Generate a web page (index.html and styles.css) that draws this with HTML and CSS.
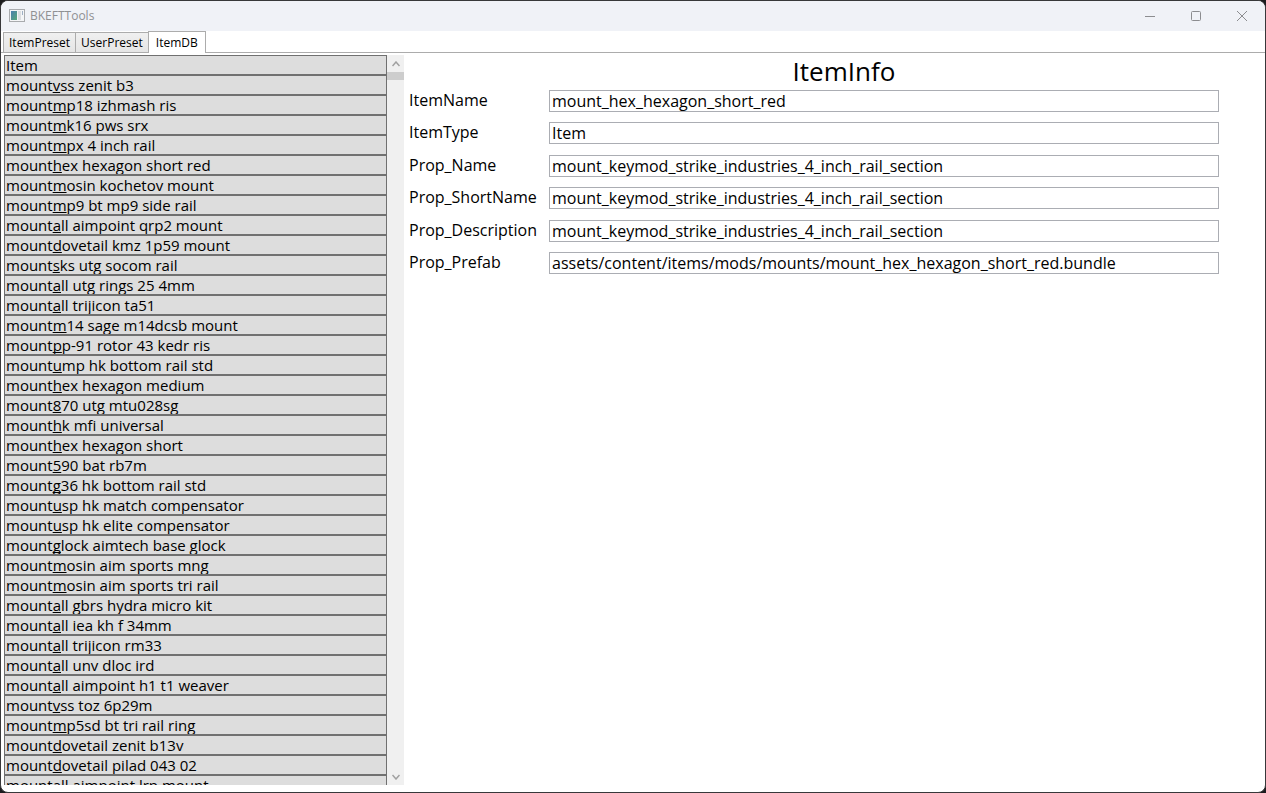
FILE: index.html
```html
<!DOCTYPE html>
<html lang="en">
<head>
<meta charset="utf-8">
<title>BKEFTTools</title>
<link rel="stylesheet" href="styles.css">
</head>
<body>
<div class="window">
  <header class="titlebar">
    <svg class="app-icon" width="16" height="14" viewBox="0 0 16 14" aria-hidden="true">
      <defs><linearGradient id="pane" x1="0" y1="0" x2="1" y2="1"><stop offset="0" stop-color="#4b7fb0"/><stop offset="1" stop-color="#58a878"/></linearGradient></defs>
      <rect x="0.5" y="0.5" width="15" height="12" fill="#f4f5f7" stroke="#a9abae"/>
      <rect x="2" y="2" width="6" height="9" fill="url(#pane)"/>
      <rect x="9" y="2" width="3" height="9" fill="#dcdee1"/>
      <rect x="13" y="2" width="1" height="4" fill="#9fb0c4"/>
    </svg>
    <h1 class="title">BKEFTTools</h1>
    <div class="controls">
      <button class="control" type="button" aria-label="Minimize"><svg width="12" height="12" viewBox="0 0 12 12"><path d="M1 6.500H11"/></svg></button>
      <button class="control" type="button" aria-label="Maximize"><svg width="12" height="12" viewBox="0 0 12 12"><rect x="1.500" y="1.500" width="9" height="9" rx="1"/></svg></button>
      <button class="control" type="button" aria-label="Close"><svg width="12" height="12" viewBox="0 0 12 12"><path d="M1 1L11 11M11 1L1 11"/></svg></button>
    </div>
  </header>
  <div class="tabs" role="tablist">
    <button class="tab" type="button" role="tab">ItemPreset</button>
    <button class="tab" type="button" role="tab">UserPreset</button>
    <button class="tab tab-active" type="button" role="tab" aria-selected="true">ItemDB</button>
  </div>
  <main class="content">
    <div class="list-pane">
      <div class="items">
        <button class="item" type="button">Item</button>
        <button class="item" type="button">mount<u>v</u>ss zenit b3</button>
        <button class="item" type="button">mount<u>m</u>p18 izhmash ris</button>
        <button class="item" type="button">mount<u>m</u>k16 pws srx</button>
        <button class="item" type="button">mount<u>m</u>px 4 inch rail</button>
        <button class="item" type="button">mount<u>h</u>ex hexagon short red</button>
        <button class="item" type="button">mount<u>m</u>osin kochetov mount</button>
        <button class="item" type="button">mount<u>m</u>p9 bt mp9 side rail</button>
        <button class="item" type="button">mount<u>a</u>ll aimpoint qrp2 mount</button>
        <button class="item" type="button">mount<u>d</u>ovetail kmz 1p59 mount</button>
        <button class="item" type="button">mount<u>s</u>ks utg socom rail</button>
        <button class="item" type="button">mount<u>a</u>ll utg rings 25 4mm</button>
        <button class="item" type="button">mount<u>a</u>ll trijicon ta51</button>
        <button class="item" type="button">mount<u>m</u>14 sage m14dcsb mount</button>
        <button class="item" type="button">mount<u>p</u>p-91 rotor 43 kedr ris</button>
        <button class="item" type="button">mount<u>u</u>mp hk bottom rail std</button>
        <button class="item" type="button">mount<u>h</u>ex hexagon medium</button>
        <button class="item" type="button">mount<u>8</u>70 utg mtu028sg</button>
        <button class="item" type="button">mount<u>h</u>k mfi universal</button>
        <button class="item" type="button">mount<u>h</u>ex hexagon short</button>
        <button class="item" type="button">mount<u>5</u>90 bat rb7m</button>
        <button class="item" type="button">mount<u>g</u>36 hk bottom rail std</button>
        <button class="item" type="button">mount<u>u</u>sp hk match compensator</button>
        <button class="item" type="button">mount<u>u</u>sp hk elite compensator</button>
        <button class="item" type="button">mount<u>g</u>lock aimtech base glock</button>
        <button class="item" type="button">mount<u>m</u>osin aim sports mng</button>
        <button class="item" type="button">mount<u>m</u>osin aim sports tri rail</button>
        <button class="item" type="button">mount<u>a</u>ll gbrs hydra micro kit</button>
        <button class="item" type="button">mount<u>a</u>ll iea kh f 34mm</button>
        <button class="item" type="button">mount<u>a</u>ll trijicon rm33</button>
        <button class="item" type="button">mount<u>a</u>ll unv dloc ird</button>
        <button class="item" type="button">mount<u>a</u>ll aimpoint h1 t1 weaver</button>
        <button class="item" type="button">mount<u>v</u>ss toz 6p29m</button>
        <button class="item" type="button">mount<u>m</u>p5sd bt tri rail ring</button>
        <button class="item" type="button">mount<u>d</u>ovetail zenit b13v</button>
        <button class="item" type="button">mount<u>d</u>ovetail pilad 043 02</button>
        <button class="item" type="button">mount<u>a</u>ll aimpoint lrp mount</button>
      </div>
      <div class="scrollbar">
        <button class="arrow" type="button" aria-label="Scroll up"><svg width="8" height="6" viewBox="0 0 8 6"><path d="M0.500 5L4 1L7.500 5"/></svg></button>
        <div class="track"><div class="thumb"></div></div>
        <button class="arrow" type="button" aria-label="Scroll down"><svg width="8" height="6" viewBox="0 0 8 6"><path d="M0.500 1L4 5L7.500 1"/></svg></button>
      </div>
    </div>
    <section class="info">
      <h2 class="heading">ItemInfo</h2>
      <form class="fields">
        <label for="name">ItemName</label><input id="name" type="text" value="mount_hex_hexagon_short_red">
        <label for="type">ItemType</label><input id="type" type="text" value="Item">
        <label for="pname">Prop_Name</label><input id="pname" type="text" value="mount_keymod_strike_industries_4_inch_rail_section">
        <label for="pshort">Prop_ShortName</label><input id="pshort" type="text" value="mount_keymod_strike_industries_4_inch_rail_section">
        <label for="pdesc">Prop_Description</label><input id="pdesc" type="text" value="mount_keymod_strike_industries_4_inch_rail_section">
        <label for="prefab">Prop_Prefab</label><input id="prefab" type="text" value="assets/content/items/mods/mounts/mount_hex_hexagon_short_red.bundle">
      </form>
    </section>
  </main>
</div>
</body>
</html>
```
FILE: styles.css
```css
* { box-sizing: border-box; }
body {
  margin: 0;
  background: #1c1c1e;
  color: #000;
  font-family: "Open Sans", "Noto Sans", sans-serif;
}
button, input { font-family: inherit; color: inherit; margin: 0; }
.window {
  display: flex;
  flex-direction: column;
  height: 100vh;
  border: 1px solid #38383a;
  border-radius: 8px;
  background: #fff;
  overflow: hidden;
}
.titlebar {
  display: flex;
  align-items: center;
  flex: none;
  height: 30px;
  padding-left: 8px;
  background: #f0f2f7;
}
.title {
  flex: 1;
  margin: 0 0 0 5px;
  font-size: 12px;
  font-weight: 400;
  line-height: 16px;
  color: #8f9093;
}
.controls { display: flex; }
.control {
  display: grid;
  place-items: center;
  width: 46px;
  height: 28px;
  padding: 0;
  border: 0;
  background: none;
}
.control svg { fill: none; stroke: #8c8d90; stroke-width: 1; }
.tabs {
  display: flex;
  align-items: flex-end;
  flex: none;
  height: 22px;
  padding-left: 2px;
  border-bottom: 1px solid #acacac;
}
.tab {
  height: 20px;
  padding: 0 5px;
  border: 1px solid #acacac;
  border-bottom: 0;
  background: linear-gradient(#f0f0f0, #e5e5e5);
  font-size: 12px;
  line-height: 18px;
}
.tab + .tab { border-left: 0; }
.tab.tab-active {
  height: 22px;
  margin-bottom: -1px;
  padding: 0 7px;
  margin-left: -1px;
  border-left: 1px solid #acacac;
  background: #fff;
}
.content {
  display: flex;
  flex: 1;
  min-height: 0;
  padding: 2px 0 7px 3px;
}
.list-pane {
  display: flex;
  flex: none;
  width: 400px;
  min-height: 0;
}
.items { flex: 1; overflow: hidden; }
.item {
  display: block;
  width: 100%;
  height: 20px;
  padding: 0 1px;
  border: 1px solid #707070;
  background: #ddd;
  font-size: 15px;
  line-height: 18px;
  text-align: left;
  white-space: nowrap;
  overflow: hidden;
}
.item u { text-underline-offset: 1px; text-decoration-thickness: 1px; text-decoration-skip-ink: none; }
.scrollbar {
  display: flex;
  flex-direction: column;
  flex: none;
  width: 17px;
  background: #f0f0f0;
}
.arrow {
  display: grid;
  place-items: center;
  height: 17px;
  padding: 0;
  border: 0;
  background: none;
}
.arrow svg { fill: none; stroke: #a0a0a0; stroke-width: 1.5; }
.track { flex: 1; }
.thumb { height: 8px; background: #cdcdcd; }
.info { flex: 1; padding: 0 46px 0 5px; }
.heading {
  margin: 0 0 0 60px;
  height: 35px;
  font-size: 26px;
  font-weight: 400;
  line-height: 33px;
  text-align: center;
}
.fields {
  display: grid;
  grid-template-columns: 130px 1fr;
  column-gap: 10px;
  align-content: space-between;
  height: 184px;
}
.fields label { font-size: 16px; line-height: 20px; white-space: nowrap; }
.fields input {
  width: 100%;
  height: 22px;
  padding: 0 2px;
  border: 1px solid #abadb3;
  background: #fff;
  font-size: 16px;
  line-height: 20px;
}
```
